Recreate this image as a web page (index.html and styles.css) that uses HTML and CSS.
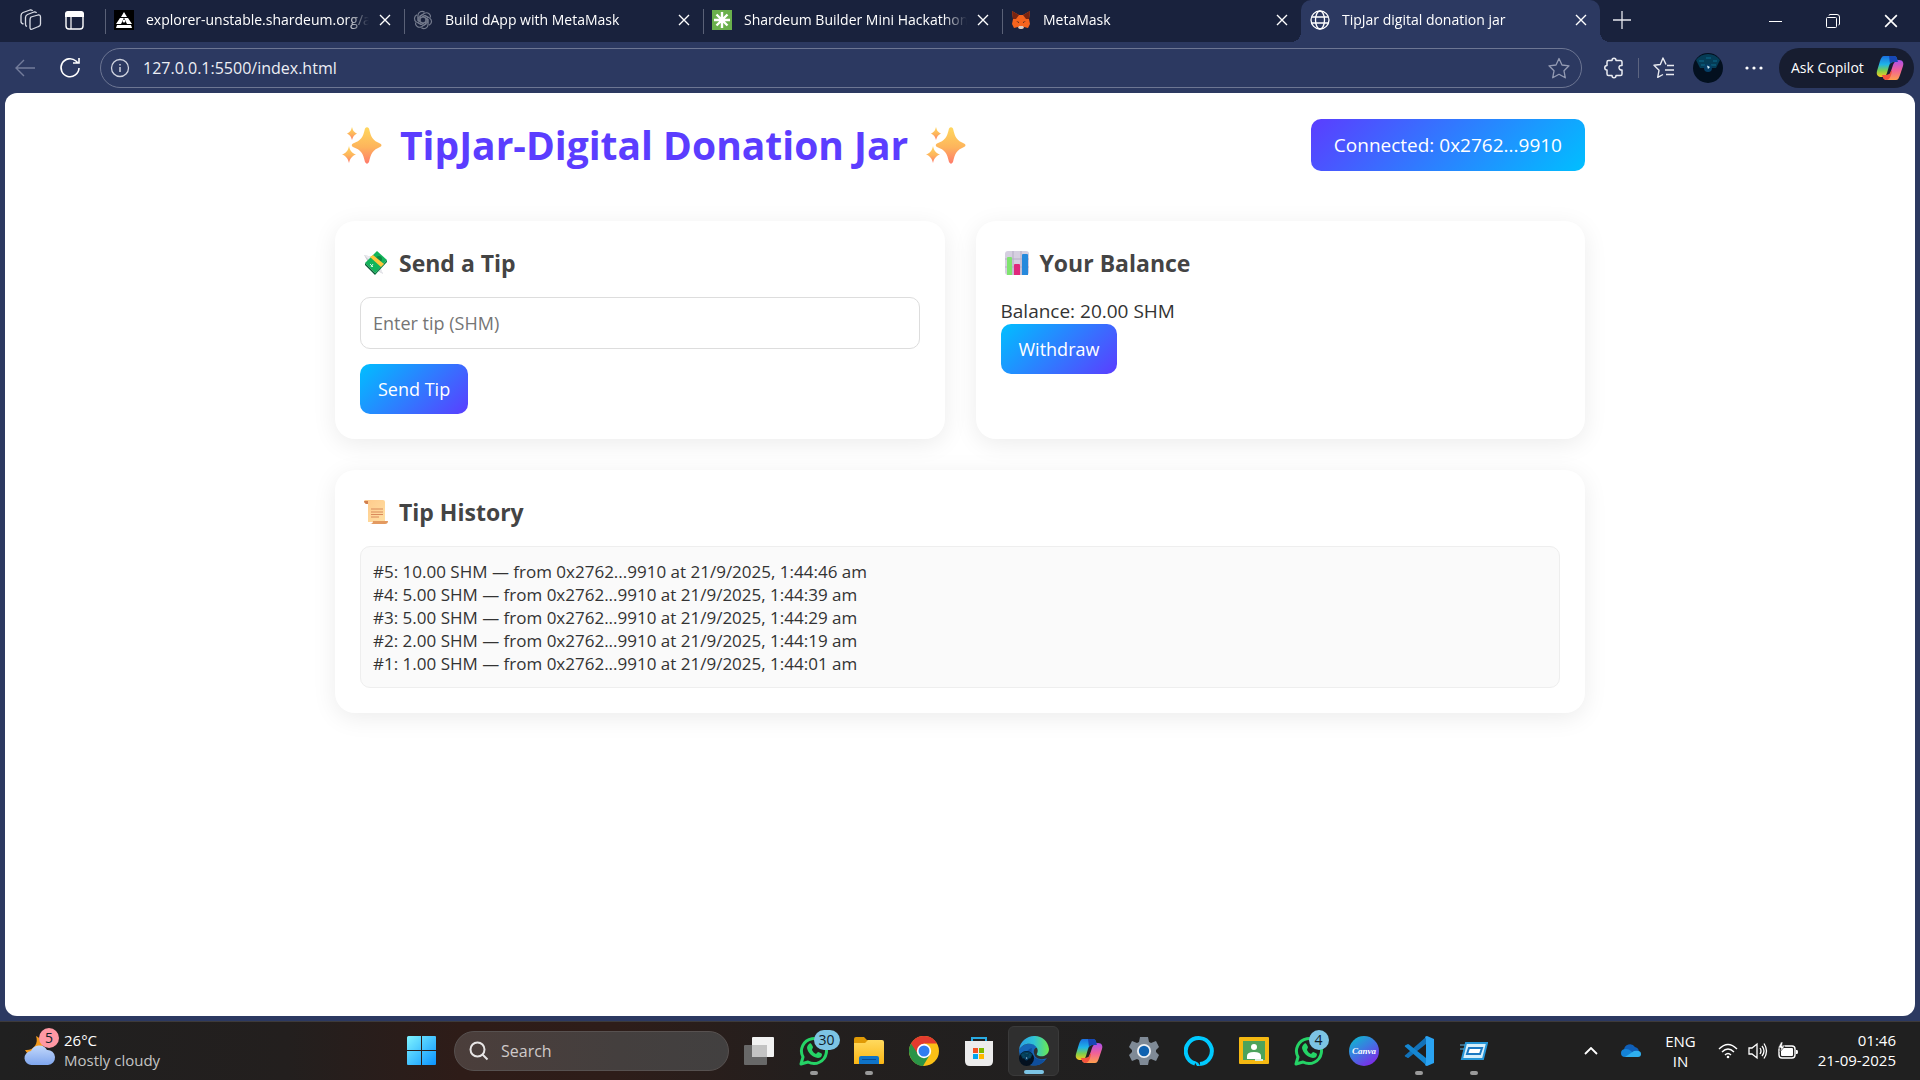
FILE: index.html
```html
<!DOCTYPE html>
<html lang="en">
<head>
<meta charset="utf-8">
<title>TipJar digital donation jar</title>
<link rel="stylesheet" href="styles.css">
</head>
<body>
<svg class="defs" aria-hidden="true">
  <defs>
    <linearGradient id="gold" x1="0" y1="0" x2="0" y2="1"><stop offset="0" stop-color="#ffd75e"/><stop offset=".55" stop-color="#fdb45c"/><stop offset="1" stop-color="#ff7a6b"/></linearGradient>
    <linearGradient id="cpA" x1="0" y1="0" x2="0" y2="1"><stop offset="0" stop-color="#1a6fe0"/><stop offset=".4" stop-color="#1fb4e8"/><stop offset=".7" stop-color="#7fcf4a"/><stop offset="1" stop-color="#ffc81e"/></linearGradient>
    <linearGradient id="cpB" x1="0" y1="0" x2="0" y2="1"><stop offset="0" stop-color="#a94ff0"/><stop offset=".5" stop-color="#f0609a"/><stop offset="1" stop-color="#ffa04d"/></linearGradient>
    <linearGradient id="win" x1="0" y1="0" x2="1" y2="1"><stop offset="0" stop-color="#7ff4ff"/><stop offset="1" stop-color="#0a93ff"/></linearGradient>
    <linearGradient id="fold" x1="0" y1="0" x2="0" y2="1"><stop offset="0" stop-color="#ffd95e"/><stop offset="1" stop-color="#fbb614"/></linearGradient>
    <linearGradient id="edgeTop" x1="0" y1="0" x2="1" y2="0"><stop offset="0" stop-color="#2a9fe6"/><stop offset=".5" stop-color="#2fc2d6"/><stop offset="1" stop-color="#6bea4f"/></linearGradient>
    <linearGradient id="cloud" x1="0" y1="0" x2="0" y2="1"><stop offset="0" stop-color="#c3d8fb"/><stop offset="1" stop-color="#7fa6ee"/></linearGradient>
    <linearGradient id="canva" x1="0" y1="0" x2=".7" y2="1"><stop offset="0" stop-color="#06c4cc"/><stop offset=".5" stop-color="#3b7be0"/><stop offset="1" stop-color="#7d2ae8"/></linearGradient>
    <linearGradient id="scroll" x1="0" y1="0" x2="1" y2="1"><stop offset="0" stop-color="#ffc98a"/><stop offset="1" stop-color="#ffe0a3"/></linearGradient>
    <symbol id="close" viewBox="0 0 12 12"><path d="M1 1l10 10M11 1L1 11" fill="none" stroke="currentColor" stroke-width="1.4"/></symbol>
    <symbol id="sparkles" viewBox="0 0 40 37"><g fill="url(#gold)"><path d="M23 1.500q2-2.500 4 0c2 9 4 12 11 15q3 1.500 0 3.500c-7 3-9 6-11 15q-2 3.500-4 0c-2-9-4-12-12-15q-2.500-2 0-3.500c8-3 10-6 12-15z"/><path d="M10 0c1 4 2 5 5 6.500-3 1.500-4 3-5 6.500-1-3.500-2-5-5-6.500C8 5 9 4 10 0z"/><path d="M7 19c1 5 3 7 7 8.500-4 1.500-6 4-7 8.500-1-4.500-3-7-7-8.500 4-1.500 6-3.500 7-8.500z"/></g></symbol>
    <symbol id="copilot" viewBox="0 0 28 28"><path d="M8 2h10c3 0 3 3 4 6h-4c-3 0-4 1-5 4l-2 7c-1 3-3 4-5 4C2 23 0 21 1 17l3-10c1-3 2-5 4-5z" fill="url(#cpA)"/><path d="M20 26H11c-3 0-4-2-5-5h4c3 0 4-1 5-4l2-6c1-3 3-5 6-5 4 0 5 3 4 6l-3 9c-1 3-2 5-4 5z" fill="url(#cpB)"/><path d="M13 2h5c3 0 3 3 4 6h-4c-2 0-3 0-4 2z" fill="#1747b5"/><path d="M15 17c-1 3-2 4-5 4H6c1 3 2 5 5 5 3-1 4-4 5-9z" fill="#f4533d"/></symbol>
    <symbol id="whatsapp" viewBox="0 0 30 30"><path d="M2 28l2-7A12.500 12.500 0 1 1 9 26z" fill="none" stroke="#25d366" stroke-width="3" stroke-linejoin="round"/><path d="M10 8c1-1 2-1 3 1l1 2c0 1-1 2-1 3 1 2 2 3 4 4l2-2c1 0 3 1 4 2 0 3-2 4-4 4-6-1-10-5-11-10 0-2 1-3 2-4z" fill="#25d366"/></symbol>
    <symbol id="orb" viewBox="0 0 30 30"><circle cx="15" cy="15" r="15" fill="#03101f"/><path d="M3 7A15 15 0 0 1 27 7l-4 8H7z" fill="#053c56"/><path d="M6 8h5M13 5h5M20 8h4M8 12h4M18 12h5" stroke="#0c6a8c"/><circle cx="15" cy="15" r="4" fill="#053e66"/><path d="M14 12.500l3 1.500-2 2z" fill="#d9f4ff"/></symbol>
  </defs>
</svg>

<header class="browser">
  <nav class="tabstrip" aria-label="Tabs">
    <div class="tab-tools">
      <button class="icon-btn" aria-label="Workspaces"><svg width="22" height="22" viewBox="0 0 22 22" fill="none" stroke="#d8dbe4" stroke-width="1.300" stroke-linejoin="round"><path d="M11 8l7-2q2.500-.5 2.500 2v7q0 2-2 2.500l-6 2.500q-2.500 1-2.500-1.500V11q0-2 1-3z"/><path d="M7 17.500q-1.500-.5-1.500-2V8.500q0-2 2-3L14 3q2-.5 2.500 1"/><path d="M3.500 15Q1 14.500 1 12.500V6.500q0-2 2-3L10 1q2-.5 2.500 1"/></svg></button>
      <button class="icon-btn" aria-label="Tab actions"><svg width="20" height="20" viewBox="0 0 20 20"><rect x="1" y="2" width="17" height="17" rx="3" fill="none" stroke="#fff" stroke-width="1.400"/><path d="M0 7V4q0-3 3-3h13q3 0 3 3v3z" fill="#fff"/><path d="M6 7v12" stroke="#fff" stroke-width="1.200"/></svg></button>
    </div>
    <div class="tab">
      <svg width="20" height="20" viewBox="0 0 20 20"><path d="M0 0h20v20H0z"/><path d="M10 2l3 5h-6zM6 8l4 0-3 6H2zM14 8l4 6h-5l-3-6zM3 15h14l1 3H2z" fill="#fff"/><path d="M10 8l2 4H8z" fill="#000"/><circle cx="10" cy="11" r="1.500" fill="#fff"/></svg>
      <a class="tab-title" href="#">explorer-unstable.shardeum.org/a</a>
      <button class="icon-btn" aria-label="Close tab"><svg width="12" height="12"><use href="#close"/></svg></button>
    </div>
    <div class="tab">
      <svg width="20" height="20" viewBox="0 0 20 20" fill="none" stroke="#747b8d" stroke-width="1.200" stroke-linejoin="round"><path id="petal" d="M7 11.500V6l4.500-2.700c3-1.600 6.500.8 6 4.200M7 8.200L11.700 5.500l3.500 2"/><use href="#petal" transform="rotate(60 10 10)"/><use href="#petal" transform="rotate(120 10 10)"/><use href="#petal" transform="rotate(180 10 10)"/><use href="#petal" transform="rotate(240 10 10)"/><use href="#petal" transform="rotate(300 10 10)"/></svg>
      <a class="tab-title" href="#">Build dApp with MetaMask</a>
      <button class="icon-btn" aria-label="Close tab"><svg width="12" height="12"><use href="#close"/></svg></button>
    </div>
    <div class="tab">
      <svg width="20" height="20" viewBox="0 0 20 20"><path d="M0 0h20v20H0z" fill="#6ab04c"/><path d="M10 2v16M2 10h16M4.500 4.500l11 11M15.500 4.500l-11 11" stroke="#fff" stroke-width="2.400"/></svg>
      <a class="tab-title" href="#">Shardeum Builder Mini Hackathon</a>
      <button class="icon-btn" aria-label="Close tab"><svg width="12" height="12"><use href="#close"/></svg></button>
    </div>
    <div class="tab">
      <svg width="20" height="20" viewBox="0 0 20 20"><path d="M1 1l7 4h4l7-4-1 8 1 5-2 4-4-1-2 2H9l-2-2-4 1-2-4 1-5z" fill="#f5641e"/><path d="M1 1l7 4-3 4-3 0zM19 1l-7 4 3 4h3z" fill="#7a2410"/><path d="M8 16h4l1 2-2 1H9l-2-1z" fill="#d8c9c0"/><path d="M5 11l3 1v1zM15 11l-3 1v1z" fill="#2b1a20"/></svg>
      <a class="tab-title" href="#">MetaMask</a>
      <button class="icon-btn" aria-label="Close tab"><svg width="12" height="12"><use href="#close"/></svg></button>
    </div>
    <div class="tab tab-active">
      <svg width="20" height="20" viewBox="0 0 20 20" fill="none" stroke="#fff" stroke-width="1.300"><circle cx="10" cy="10" r="9"/><ellipse cx="10" cy="10" rx="4.500" ry="9"/><path d="M2 7h16M2 13h16"/></svg>
      <a class="tab-title" href="#">TipJar digital donation jar</a>
      <button class="icon-btn" aria-label="Close tab"><svg width="12" height="12"><use href="#close"/></svg></button>
    </div>
    <button class="icon-btn new-tab" aria-label="New tab"><svg width="18" height="18" viewBox="0 0 18 18"><path d="M9 0v18M0 9h18" stroke="#e6e8ee" stroke-width="1.300"/></svg></button>
    <div class="window-controls">
      <button class="icon-btn" aria-label="Minimize"><svg width="14" height="14"><path d="M1 7.500h13" stroke="#fff"/></svg></button>
      <button class="icon-btn" aria-label="Restore"><svg width="14" height="14" fill="none" stroke="#fff"><rect x=".5" y="3.500" width="10" height="10" rx="1"/><path d="M3 1.500q0-1 1-1h7q2.500 0 2.500 2.500v7q0 1-1 1"/></svg></button>
      <button class="icon-btn" aria-label="Close window"><svg width="14" height="14"><use href="#close"/></svg></button>
    </div>
  </nav>

  <div class="toolbar">
    <button class="icon-btn nav-btn" aria-label="Back"><svg width="20" height="18" viewBox="0 0 20 18" fill="none" stroke="#737c9b" stroke-width="1.400"><path d="M20 9H1M9 1L1 9l8 8"/></svg></button>
    <button class="icon-btn nav-btn" aria-label="Refresh"><svg width="22" height="22" viewBox="0 0 22 22" fill="none" stroke="#fff" stroke-width="1.600"><path d="M20 11a9 9 0 1 1-3-7l2 2M20 1v5h-6"/></svg></button>
    <div class="address">
      <svg width="20" height="20" viewBox="0 0 20 20" fill="none" stroke="#cfd3df" stroke-width="1.300"><circle cx="10" cy="10" r="8.500"/><path d="M10 9v5M10 6v1.500" stroke-width="1.500"/></svg>
      <input class="address-input" type="text" aria-label="Address" value="127.0.0.1:5500/index.html">
      <button class="icon-btn" aria-label="Add to favourites"><svg width="22" height="22" viewBox="0 0 22 22" fill="none" stroke="#949bb3" stroke-width="1.300" stroke-linejoin="round"><path d="M11 1.500l3 6.500 7 .8-5 5 1.300 7L11 17.300l-6.300 3.500L6 13.800l-5-5L8 8z"/></svg></button>
    </div>
    <div class="actions">
      <button class="icon-btn" aria-label="Extensions"><svg width="20" height="22" viewBox="0 0 20 22" fill="none" stroke="#e9ebf1" stroke-width="1.500" stroke-linejoin="round"><path d="M8 3.500c0-3 4-3 4 0h4.500q1.500 0 1.500 1.500v3.500c-4-1-4 5 0 4.500V17q0 1.500-1.500 1.500H12c0 3-4 3-4 0H4.500Q3 18.500 3 17v-4c-3 0-3-4.500 0-4.500V5q0-1.500 1.500-1.500z"/></svg></button>
      <span class="rule"></span>
      <button class="icon-btn" aria-label="Favourites"><svg width="22" height="22" viewBox="0 0 22 22" fill="none" stroke="#e9ebf1" stroke-width="1.400" stroke-linejoin="round"><path d="M13 7.500L10 1 7.300 7.500 1 8.300l5 5-1.300 7L10 17.500M14 8.500h7M12 13h9M13 17.500h8"/></svg></button>
      <button class="icon-btn profile" aria-label="Profile"><svg width="30" height="30"><use href="#orb"/></svg></button>
      <button class="icon-btn" aria-label="More"><svg width="18" height="4" fill="#fff"><circle cx="2" cy="2" r="1.600"/><circle cx="9" cy="2" r="1.600"/><circle cx="16" cy="2" r="1.600"/></svg></button>
    </div>
    <button class="copilot-btn">Ask Copilot <svg width="28" height="28"><use href="#copilot"/></svg></button>
  </div>
</header>

<main class="viewport">
  <div class="container">
    <div class="page-header">
      <h1 class="page-title">
        <svg width="40" height="37"><use href="#sparkles"/></svg>
        TipJar-Digital Donation Jar
        <svg width="40" height="37"><use href="#sparkles"/></svg>
      </h1>
      <button class="wallet-btn">Connected: 0x2762...9910</button>
    </div>

    <div class="cards">
      <section class="card">
        <h2 class="card-title"><svg width="24" height="24" viewBox="0 0 24 24"><path d="M0 4l8 2 2 4-6 1zM15 14l4 9-8-5z" fill="#c9c9cf"/><path d="M0 4l5 5 4-3zM19 23l-6-5 3-3z" fill="#e9e9ee"/><path d="M1 12L13 0l10 9-12 13z" fill="#13b45a"/><path d="M1 12l10 10v2L1 14z" fill="#075c35"/><path d="M23 9L11 22v2l12-13z" fill="#0a8043"/><circle cx="15" cy="8" r="3" fill="#0a8a44"/><path d="M6 13l3 3M7 16l2-3" stroke="#d6f7e2"/><path d="M6 6l11 10 3-3L9 4z" fill="#ffc83d"/></svg>Send a Tip</h2>
        <form class="tip-form">
          <input class="tip-input" type="text" aria-label="Tip amount" placeholder="Enter tip (SHM)">
          <button class="btn" type="button">Send Tip</button>
        </form>
      </section>

      <section class="card">
        <h2 class="card-title"><svg width="24" height="24" viewBox="0 0 24 24"><rect width="24" height="24" rx="3" fill="#d5cfe0"/><path d="M8 0v24M16 0v24M0 8h24M0 16h24" stroke="#b4acc5"/><path d="M2 24V7q0-1 1-1h3q1 0 1 1v17z" fill="#7fe36f"/><path d="M9 24V14q0-1 1-1h4q1 0 1 1v10z" fill="#e0287c"/><path d="M17 24V4q0-1 1-1h4q1 0 1 1v20z" fill="#2689dc"/></svg>Your Balance</h2>
        <div class="balance">Balance: 20.00 SHM</div>
        <button class="btn">Withdraw</button>
      </section>

      <section class="card card-wide">
        <h2 class="card-title"><svg width="24" height="24" viewBox="0 0 24 24"><path d="M1 0h18q2 0 2 2v20H4V4H2Q0 3 0 1z" fill="url(#scroll)"/><path d="M0 1h4v3H2Q0 3 0 1z" fill="#cf7f50"/><path d="M7 9h12M7 12h12M7 14.500h12M7 17h8" stroke="#d98a5b" stroke-width="1.200"/><path d="M9 21h15q0 3-3 3H6q3 0 3-3z" fill="#e39a60"/></svg>Tip History</h2>
        <ul class="history">
          <li>#5: 10.00 SHM — from 0x2762...9910 at 21/9/2025, 1:44:46 am</li>
          <li>#4: 5.00 SHM — from 0x2762...9910 at 21/9/2025, 1:44:39 am</li>
          <li>#3: 5.00 SHM — from 0x2762...9910 at 21/9/2025, 1:44:29 am</li>
          <li>#2: 2.00 SHM — from 0x2762...9910 at 21/9/2025, 1:44:19 am</li>
          <li>#1: 1.00 SHM — from 0x2762...9910 at 21/9/2025, 1:44:01 am</li>
        </ul>
      </section>
    </div>
  </div>
</main>

<footer class="taskbar">
  <button class="weather">
    <span class="badge-host">
      <svg width="32" height="32" viewBox="0 0 32 32"><path d="M12 2c3 8-3 15-11 14 2 4 6 6 10 5l8-8c0-5-3-9-7-11z" fill="#f49a1c"/><path d="M8 31a7 7 0 0 1-1-14 9 9 0 0 1 16-1 7.500 7.500 0 0 1 1 15z" fill="url(#cloud)"/></svg>
      <span class="badge badge-pink">5</span>
    </span>
    <span class="weather-text"><span>26°C</span><span class="muted">Mostly cloudy</span></span>
  </button>

  <div class="apps">
    <button class="app" aria-label="Start"><svg width="30" height="30" viewBox="0 0 30 30" fill="url(#win)"><path d="M1.500 0H14v14H0V1.500Q0 0 1.500 0zM15 0h13q1 0 1 1v13H15zM0 15h14v14H1q-1 0-1-1zM15 15h14v13q0 1-1 1H15z"/></svg></button>
    <label class="search">
      <svg width="20" height="20" viewBox="0 0 20 20" fill="none" stroke="#e8e6e6" stroke-width="2"><circle cx="8.500" cy="8.500" r="7"/><path d="M13.500 13.500l5 5"/></svg>
      <input class="search-input" type="text" placeholder="Search" aria-label="Search">
    </label>
    <button class="app" aria-label="Task view"><svg width="30" height="28" viewBox="0 0 30 28"><rect y="8" width="23" height="20" rx="1" fill="#686868"/><rect x="8" width="22" height="20" rx="1" fill="#f2f2f2"/><path d="M8 8h15v12H8z" fill="#c3c3c3"/></svg></button>
    <button class="app open" aria-label="WhatsApp"><span class="badge-host"><svg width="30" height="30"><use href="#whatsapp"/></svg><span class="badge">30</span></span></button>
    <button class="app open" aria-label="File Explorer"><svg width="30" height="28" viewBox="0 0 30 28"><path d="M0 2q0-2 2-2h8l3 3h15v8H0z" fill="#e09a05"/><path d="M0 6h11l3-3h14q2 0 2 2v21q0 1-1 1H0z" fill="url(#fold)"/><path d="M5 27v-6q0-2 2-2h16q2 0 2 2v6z" fill="#0f73c8"/><path d="M8 22.500h14" stroke="#084b94"/></svg></button>
    <button class="app" aria-label="Chrome"><svg width="30" height="30" viewBox="0 0 30 30"><circle cx="15" cy="15" r="15" fill="#fbc116"/><path d="M15 15L2 7.500A15 15 0 0 0 14 30l7-11.500z" fill="#2a9447"/><path d="M2 7.500A15 15 0 0 1 28 7.500H15L9 18z" fill="#e33b2e"/><circle cx="15" cy="15" r="7.200" fill="#fff"/><circle cx="15" cy="15" r="5.500" fill="#2f7def"/></svg></button>
    <button class="app" aria-label="Microsoft Store"><svg width="30" height="30" viewBox="0 0 30 30"><path d="M8 6V2h14v4" fill="none" stroke="#29abe2" stroke-width="2"/><path d="M1 5h28v20q0 5-5 5H6q-5 0-5-5z" fill="#ececec"/><path d="M9 12h5v5H9z" fill="#f25022"/><path d="M15 12h5v5h-5z" fill="#7fba00"/><path d="M9 18h5v5H9z" fill="#00a4ef"/><path d="M15 18h5v5h-5z" fill="#ffb900"/></svg></button>
    <button class="app current" aria-label="Edge"><svg width="30" height="30" viewBox="0 0 30 30"><path d="M0 14A15 15 0 0 0 28 22c-4 2-12 2-13-5-1-4 2-6 4-5-3-6-15-6-19 2z" fill="#1666b8"/><path d="M0 14C2-4 28-5 30 13c0 7-8 9-12 6-1-1 2-3 0-7-3-6-14-6-18 2z" fill="url(#edgeTop)"/><path d="M9 27c-5-6-3-13 4-15-2 7 3 12 13 12-4 6-11 7-17 3z" fill="#0f4e9c"/><svg y="15" width="15" height="15"><use href="#orb"/></svg></svg></button>
    <button class="app" aria-label="Copilot"><svg width="28" height="28"><use href="#copilot"/></svg></button>
    <button class="app" aria-label="Settings"><svg width="30" height="30" viewBox="0 0 30 30"><path d="M11 1h8l1 5 2 1 5-2 3 6-3 3v2l3 3-3 6-5-2-2 1-1 5h-8l-1-5-2-1-5 2-3-6 3-3v-2l-3-3 3-6 5 2 2-1z" fill="#7f8a96"/><circle cx="15" cy="15" r="7" fill="#eef1f4"/><circle cx="15" cy="15" r="5.200" fill="#0f62b0"/></svg></button>
    <button class="app" aria-label="Alexa"><svg width="30" height="30" viewBox="0 0 30 30"><path d="M11 27.500a13 13 0 1 1 5 .5" fill="none" stroke="#00caff" stroke-width="4"/><path d="M10 25q5 1 6 5h-3z" fill="#00caff"/></svg></button>
    <button class="app" aria-label="Classroom"><svg width="30" height="27" viewBox="0 0 30 27"><rect width="30" height="27" rx="1" fill="#f5b912"/><path d="M4 4h22v19H4z" fill="#4da35b"/><circle cx="15" cy="10" r="3" fill="#fff"/><path d="M8 19q0-4 7-4t7 4v3H8z" fill="#fff"/><path d="M16 22h8v2h-8z" fill="#d8efdc"/></svg></button>
    <button class="app" aria-label="WhatsApp chats"><span class="badge-host"><svg width="30" height="30"><use href="#whatsapp"/></svg><span class="badge">4</span></span></button>
    <button class="app" aria-label="Canva"><svg width="30" height="30" viewBox="0 0 30 30"><circle cx="15" cy="15" r="15" fill="url(#canva)"/><text class="canva-word" x="15" y="18" text-anchor="middle">Canva</text></svg></button>
    <button class="app open" aria-label="Visual Studio Code"><svg width="30" height="30" viewBox="0 0 30 30"><path d="M2 18.500L22 1v7L5 21.500q-1 1-2 0l-2-1q-1-1 1-2z" fill="#1272b9"/><path d="M2 11.500L22 29v-7L5 8.500q-1-1-2 0l-2 1q-1 1 1 2z" fill="#1587d2"/><path d="M21 1q1-1 2-1l7 3v24l-7 3q-1 0-2-1l1-2V3z" fill="#2aa3f2"/></svg></button>
    <button class="app open" aria-label="Run"><svg width="28" height="18" viewBox="0 0 28 18"><path d="M6 1h21l-4 16H2z" fill="#d5effc" stroke="#2596d8" stroke-width="2"/><path d="M9 6h13l-2 6H7z" fill="#fff" stroke="#1a78c2" stroke-width="2"/><path d="M0 3h5M0 7h4" stroke="#5cb7e8"/></svg></button>
  </div>

  <div class="tray">
    <button class="icon-btn" aria-label="Show hidden icons"><svg width="14" height="8" viewBox="0 0 14 8"><path d="M1 7l6-6 6 6" fill="none" stroke="#fff" stroke-width="1.800"/></svg></button>
    <button class="icon-btn tray-cloud" aria-label="OneDrive"><svg width="20" height="13" viewBox="0 0 20 13"><path d="M3 6a6 6 0 0 1 11-3q4 1 4 5L8 11z" fill="#0f5fb8"/><path d="M4 13Q0 13 0 9t5-4q3 0 5 2l6 6z" fill="#1483d8"/><path d="M4 13l9-6q7-1 7 3 0 3-3 3z" fill="#2fb0f0"/></svg></button>
    <button class="lang"><span>ENG</span><span>IN</span></button>
    <button class="status" aria-label="Network, volume and battery">
      <svg width="20" height="16" viewBox="0 0 20 16" fill="none" stroke="#fff" stroke-width="1.400"><path d="M1 6q9-9 18 0M4 9q6-6 12 0M7 12q3-3 6 0"/><circle cx="10" cy="14" r="1.300" fill="#fff" stroke="none"/></svg>
      <svg width="20" height="18" viewBox="0 0 20 18" fill="none" stroke="#fff" stroke-width="1.300"><path d="M1 6h3l5-4v14l-5-4H1zM12 6q2 3 0 6M14 4q4 5 0 10M16 1.500q5 7.500 0 15"/></svg>
      <svg width="20" height="17" viewBox="0 0 20 17"><rect x="1" y="4" width="16" height="12" rx="3" fill="none" stroke="#fff" stroke-width="1.400"/><rect x="3" y="6" width="12" height="8" rx="1" fill="#fff"/><path d="M18 8h1q1 0 1 2t-1 2h-1z" fill="#fff"/><path d="M3 0L0 6h3l-1 4 5-6H4l1-4z" fill="#fff" stroke="#202020" stroke-width=".6"/></svg>
    </button>
    <button class="clock"><span>01:46</span><span>21-09-2025</span></button>
  </div>
</footer>
</body>
</html>
```
FILE: styles.css
```css
* { box-sizing: border-box; }

body {
  margin: 0;
  min-height: 100vh;
  display: flex;
  flex-direction: column;
  background: #2c3961;
  color: #333;
  font-family: "Open Sans", "Noto Sans", sans-serif;
  font-size: 19px;
}

button, input { font-family: inherit; }
button { border: 0; background: none; padding: 0; color: inherit; cursor: pointer; }
svg { display: block; flex: none; }
.defs { position: absolute; width: 0; height: 0; }

.icon-btn { display: grid; place-items: center; flex: none; color: #fff; }

/* Tab strip */
.tabstrip {
  display: flex;
  height: 42px;
  background: #19223d;
  color: #fff;
  font-size: 14px;
}
.tab-tools { display: flex; align-items: center; gap: 23px; width: 105px; padding: 0 0 2px 20px; flex: none; }
.tab {
  display: flex;
  align-items: center;
  flex: 0 1 299px;
  min-width: 0;
  height: 42px;
  padding: 0 13px 3px 9px;
  background: linear-gradient(#5a6177, #5a6177) 0 9px / 1px 25px no-repeat;
}
.tab-title {
  flex: 1;
  min-width: 0;
  margin: 0 10px 0 12px;
  overflow: hidden;
  white-space: nowrap;
  color: #fff;
  text-decoration: none;
  -webkit-mask-image: linear-gradient(to left, transparent, #000 24px);
  mask-image: linear-gradient(to left, transparent, #000 24px);
}
.tab-active { position: relative; background: #2c3961; border-radius: 10px 10px 0 0; }
.tab-active::before, .tab-active::after {
  content: "";
  position: absolute;
  bottom: 0;
  width: 10px;
  height: 10px;
}
.tab-active::before { left: -10px; background: radial-gradient(circle at 0 0, transparent 10px, #2c3961 10px); }
.tab-active::after { right: -10px; background: radial-gradient(circle at 100% 0, transparent 10px, #2c3961 10px); }
.new-tab { width: 44px; padding-bottom: 3px; }
.window-controls { display: flex; margin-left: auto; }
.window-controls .icon-btn { width: 58px; }

/* Toolbar */
.toolbar { display: flex; align-items: center; height: 51px; padding: 0 6px 0 0; }
.nav-btn { width: 40px; height: 40px; }
.nav-btn:first-child { width: 50px; }
.address {
  display: flex;
  align-items: center;
  flex: 1;
  height: 40px;
  margin-left: 10px;
  padding: 0 11px 0 9px;
  border: 1px solid #6d7693;
  border-radius: 20px;
}
.address-input {
  flex: 1;
  min-width: 0;
  margin-left: 13px;
  padding: 0;
  border: 0;
  outline: 0;
  background: none;
  color: #eceef4;
  font-size: 16px;
}
.actions { display: flex; align-items: center; gap: 14px; padding: 0 16px 0 22px; }
.profile { margin: 0 8px 0 4px; }
.rule { width: 1px; height: 20px; background: #5c6480; }
.copilot-btn {
  display: flex;
  align-items: center;
  justify-content: space-between;
  width: 135px;
  height: 40px;
  padding: 0 10px 0 12px;
  border-radius: 20px;
  background: #171d30;
  color: #fff;
  font-size: 14px;
}

/* Page */
.viewport {
  flex: 1;
  margin: 0 5px 5px;
  padding: 25px;
  border-radius: 12px;
  background: #fff;
}
.container { max-width: 1250px; margin: 0 auto; }
.page-header { display: flex; align-items: center; justify-content: space-between; margin-bottom: 49px; }
.page-title {
  display: flex;
  align-items: center;
  gap: 18px;
  margin: 0;
  padding-left: 7px;
  color: #5b3dff;
  font-size: 39px;
  line-height: 54px;
}
.wallet-btn {
  height: 52px;
  padding: 0 23px;
  border-radius: 10px;
  background: linear-gradient(135deg, #5b3dff, #00bfff);
  color: #fff;
  font-size: 19px;
}
.cards { display: grid; grid-template-columns: 1fr 1fr; gap: 31px; }
.card {
  padding: 25px;
  border-radius: 20px;
  background: #fff;
  box-shadow: 0 5px 25px rgba(0, 0, 0, .08);
}
.card-wide { grid-column: 1 / -1; }
.card-title {
  display: flex;
  align-items: center;
  gap: 11px;
  margin: 0 0 17px;
  padding-left: 4px;
  color: #444;
  font-size: 23px;
  line-height: 34px;
}
.tip-form { display: flex; flex-direction: column; align-items: flex-start; gap: 15px; }
.tip-input {
  width: 100%;
  height: 52px;
  padding: 0 12px;
  border: 1px solid #ddd;
  border-radius: 10px;
  background: #fff;
  font-size: 18px;
}
.tip-input::placeholder { color: #757575; opacity: 1; }
.balance { padding-top: 2px; line-height: 25px; }
.btn {
  display: block;
  height: 50px;
  padding: 0 18px;
  border-radius: 10px;
  background: linear-gradient(135deg, #00bfff, #5b3dff);
  color: #fff;
  font-size: 18px;
}
.history {
  margin: 0;
  padding: 13px 12px 12px;
  border: 1px solid #eee;
  border-radius: 10px;
  background: #fafafa;
  font-size: 17px;
  line-height: 23px;
  list-style: none;
}

/* Taskbar */
.taskbar {
  display: grid;
  grid-template-columns: 1fr auto 1fr;
  align-items: center;
  height: 59px;
  padding-bottom: 1px;
  border-top: 1px solid #3d3a3a;
  background: linear-gradient(90deg, #202020 0, #231f1e 15%, #2e1c18 24%, #2e1d19 32%, #231f1e 42%, #202020 60%);
  color: #fff;
  line-height: 20px;
}
.weather { display: flex; align-items: center; gap: 8px; padding: 0 0 2px 24px; text-align: left; }
.weather-text, .lang, .clock { display: flex; flex-direction: column; font-size: 15px; line-height: 20px; }
.muted { color: #c4c4c4; }
.apps { display: flex; align-items: center; padding-right: 25px; }
.app {
  position: relative;
  display: grid;
  place-items: center;
  width: 51px;
  height: 50px;
  margin: 0 2px;
  border-radius: 6px;
}
.open::after, .current::after {
  content: "";
  position: absolute;
  bottom: 1px;
  left: 50%;
  width: 8px;
  height: 4px;
  margin-left: -4px;
  border-radius: 2px;
  background: #9a9a9a;
}
.current { background: #2f2f2f; border: 1px solid #3a3a3a; }
.current::after { width: 20px; margin-left: -10px; background: #7cc4e4; }
.badge-host { position: relative; display: block; }
.badge {
  position: absolute;
  top: -6px;
  left: 15px;
  min-width: 20px;
  height: 20px;
  padding: 0 5px;
  border-radius: 10px;
  background: #7cc4e4;
  color: #10202a;
  font-size: 14px;
  line-height: 20px;
  text-align: center;
}
.badge-pink { background: #ff98a4; }
.search {
  display: flex;
  align-items: center;
  gap: 12px;
  width: 275px;
  height: 40px;
  margin: 0 2px 0 5px;
  padding: 0 14px;
  border: 1px solid #575150;
  border-radius: 20px;
  background: linear-gradient(90deg, #4b3e3b, #443f3e 60%, #424040);
}
.search-input { flex: 1; min-width: 0; padding: 0; border: 0; outline: 0; background: none; color: #fff; font-size: 16px; }
.search-input::placeholder { color: #cfcaca; opacity: 1; }
.canva-word { fill: #fff; font-family: "Liberation Serif", serif; font-size: 9px; font-style: italic; font-weight: 700; }
.tray { display: flex; align-items: center; justify-content: flex-end; padding-right: 24px; }
.tray-cloud { margin: 0 24px 0 23px; }
.lang { align-items: center; margin-right: 22px; }
.status { display: flex; align-items: center; gap: 10px; margin-right: 20px; }
.clock { align-items: flex-end; padding-bottom: 2px; }
```
